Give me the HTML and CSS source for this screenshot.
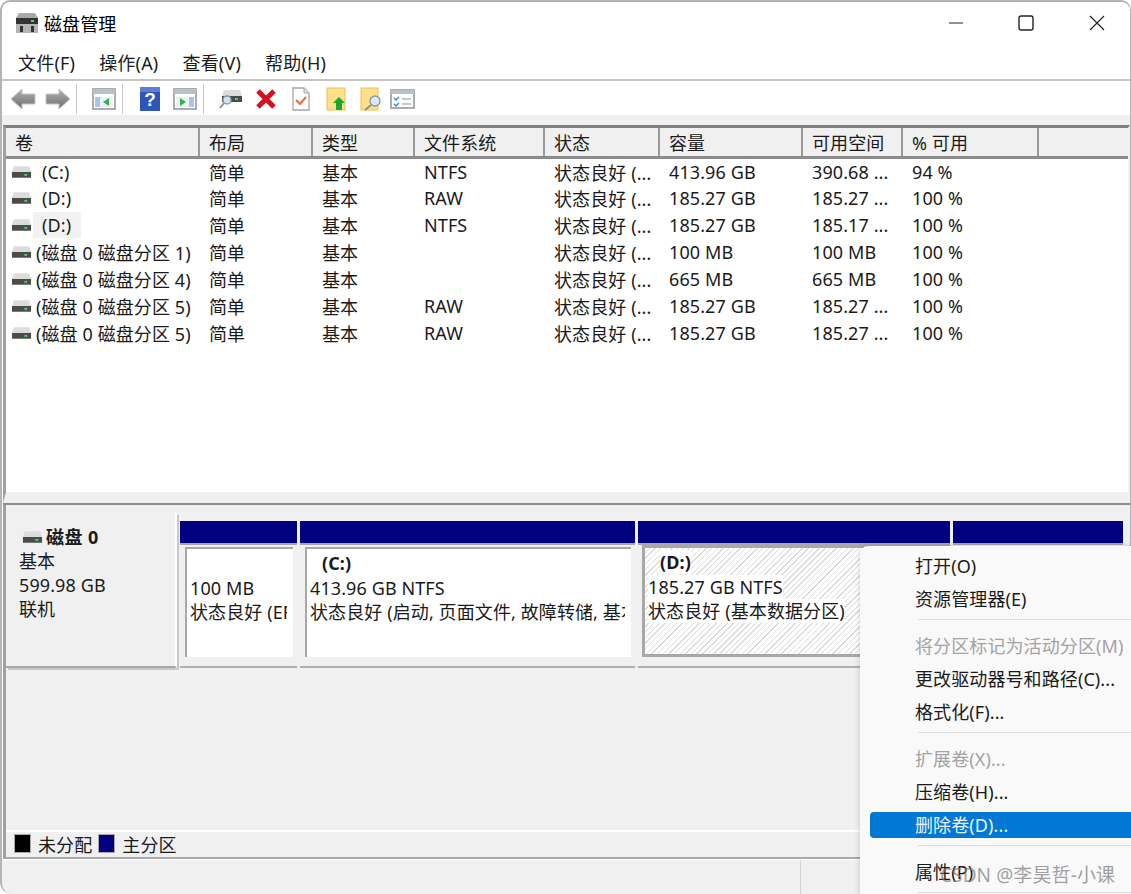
FILE: index.html
```html
<!DOCTYPE html>
<html lang="zh-CN">
<head>
    <meta charset="UTF-8">
    <title>磁盘管理</title>
    <link rel="stylesheet" href="styles.css">
</head>
<body>
    <svg class="defs" width="0" height="0">
        <defs>
            <symbol id="drive" viewBox="0 0 22 14">
                <path d="M3 1h16l2 6H1z" fill="#dcdcdc"/>
                <rect x="1" y="7" width="20" height="6" fill="#4b4b4b"/>
                <rect x="14" y="9" width="3" height="2" fill="#3fdc5a"/>
            </symbol>
            <symbol id="pane" viewBox="0 0 24 22">
                <rect x="1" y="1" width="22" height="20" fill="#fff" stroke="#8b9298" stroke-width="1.5"/>
                <rect x="1" y="1" width="22" height="5" fill="#b9c1c8"/>
                <rect x="3" y="9" width="18" height="10" fill="#eef1f3"/>
            </symbol>
            <linearGradient id="arrow" x1="0" y1="0" x2="0" y2="1">
                <stop offset="0" stop-color="#b0b0b0"/>
                <stop offset="1" stop-color="#6e6e6e"/>
            </linearGradient>
        </defs>
    </svg>

    <div class="window">
        <div class="titlebar">
            <svg class="app-icon" width="24" height="22" viewBox="0 0 24 22">
                <path d="M4 1h16l3 5H1z" fill="#a8a8a8"/>
                <rect x="1" y="6" width="22" height="6" fill="#333"/>
                <rect x="16" y="8" width="3" height="2" fill="#3fdc5a"/>
                <rect x="1" y="12" width="22" height="9" fill="#b4b4b4"/>
                <rect x="5" y="14" width="3" height="6" fill="#333"/>
                <rect x="16" y="14" width="3" height="6" fill="#333"/>
            </svg>
            <span class="title">磁盘管理</span>
            <div class="win-controls">
                <svg width="14" height="14" viewBox="0 0 14 14"><path d="M0 7h14" stroke="#222" fill="none"/></svg>
                <svg width="16" height="16" viewBox="0 0 16 16"><rect x="1" y="1" width="14" height="14" rx="2" fill="none" stroke="#222" stroke-width="1.4"/></svg>
                <svg width="16" height="16" viewBox="0 0 16 16"><path d="M1 1l14 14M15 1L1 15" stroke="#222" stroke-width="1.2" fill="none"/></svg>
            </div>
        </div>

        <div class="menubar">
            <span>文件(F)</span>
            <span>操作(A)</span>
            <span>查看(V)</span>
            <span>帮助(H)</span>
        </div>

        <div class="toolbar">
            <span class="tool"><svg width="26" height="22" viewBox="0 0 26 22"><path d="M1 11L12 1v5h13v10H12v5z" fill="url(#arrow)" stroke="#c4c4c4"/></svg></span>
            <span class="tool"><svg width="26" height="22" viewBox="0 0 26 22"><path d="M25 11L14 1v5H1v10h13v5z" fill="url(#arrow)" stroke="#c4c4c4"/></svg></span>
            <span class="tool-sep"></span>
            <span class="tool"><svg width="24" height="22" viewBox="0 0 24 22"><use href="#pane"/><path d="M3 9h5v10H3z" fill="#a9c6e6"/><path d="M17 10v8l-6-4z" fill="#2fb34a"/></svg></span>
            <span class="tool-sep"></span>
            <span class="tool"><svg width="20" height="24" viewBox="0 0 20 24"><rect width="20" height="24" fill="#2f55b8"/><rect width="20" height="5" fill="#5b7fd6"/><text x="10" y="19" text-anchor="middle" class="help-mark">?</text></svg></span>
            <span class="tool"><svg width="24" height="22" viewBox="0 0 24 22"><use href="#pane"/><path d="M16 9h5v10h-5z" fill="#a9c6e6"/><path d="M7 10v8l6-4z" fill="#2fb34a"/></svg></span>
            <span class="tool-sep"></span>
            <span class="tool"><svg width="24" height="24" viewBox="0 0 24 24"><use href="#drive" x="2" y="2" width="22" height="14"/><circle cx="8" cy="13" r="4" fill="#cfe3f2" stroke="#8a97a3" stroke-width="1.4"/><path d="M5 16l-4 5" stroke="#8a8f94" stroke-width="2"/></svg></span>
            <span class="tool"><svg width="22" height="22" viewBox="0 0 22 22"><path d="M3 3l16 16M19 3L3 19" stroke="#d4111e" stroke-width="5" fill="none"/></svg></span>
            <span class="tool"><svg width="18" height="24" viewBox="0 0 18 24"><path d="M1 1h11l5 5v17H1z" fill="#fff" stroke="#a5a5a5" stroke-width="1.3"/><path d="M12 1v5h5" fill="#e4e4e4" stroke="#a5a5a5"/><path d="M4 13l4 4 6-7" stroke="#ea6a36" stroke-width="2" fill="none"/></svg></span>
            <span class="tool"><svg width="20" height="24" viewBox="0 0 20 24"><rect x="1" y="1" width="18" height="22" fill="#fde08a" stroke="#eec24f"/><path d="M13 10l6 6h-3v7h-6v-7H7z" fill="#19a82f"/></svg></span>
            <span class="tool"><svg width="22" height="24" viewBox="0 0 22 24"><rect x="1" y="1" width="17" height="22" fill="#fde08a" stroke="#eec24f"/><circle cx="15" cy="14" r="5" fill="#d8eaf5" stroke="#8a97a3" stroke-width="1.4"/><path d="M11 18l-6 5" stroke="#8a8f94" stroke-width="2"/></svg></span>
            <span class="tool tool-last"><svg width="25" height="20" viewBox="0 0 25 20"><rect x="1" y="1" width="23" height="18" fill="#fff" stroke="#8b9298" stroke-width="1.5"/><rect x="1" y="1" width="23" height="4" fill="#b9c1c8"/><path d="M4 9l2 2 3-3M4 15l2 2 3-3" stroke="#2f8ae0" stroke-width="1.5" fill="none"/><path d="M12 10h9M12 15h9" stroke="#b5b5b5" stroke-width="1.5"/></svg></span>
        </div>
        <div class="toolbar-gap"></div>

        <div class="list-pane">
            <table class="volumes">
                <colgroup>
                    <col class="c-vol"><col class="c-layout"><col class="c-type"><col class="c-fs"><col class="c-status"><col class="c-cap"><col class="c-free"><col class="c-pct"><col>
                </colgroup>
                <thead>
                    <tr>
                        <th>卷</th><th>布局</th><th>类型</th><th>文件系统</th><th>状态</th><th>容量</th><th>可用空间</th><th>% 可用</th><th></th>
                    </tr>
                </thead>
                <tbody>
                    <tr><td><div class="vol"><svg class="drive-icon"><use href="#drive"/></svg><span class="vol-name">(C:)</span></div></td><td>简单</td><td>基本</td><td>NTFS</td><td>状态良好 (...</td><td>413.96 GB</td><td>390.68 ...</td><td>94 %</td><td></td></tr>
                    <tr><td><div class="vol"><svg class="drive-icon"><use href="#drive"/></svg><span class="vol-name">(D:)</span></div></td><td>简单</td><td>基本</td><td>RAW</td><td>状态良好 (...</td><td>185.27 GB</td><td>185.27 ...</td><td>100 %</td><td></td></tr>
                    <tr><td><div class="vol"><svg class="drive-icon"><use href="#drive"/></svg><span class="vol-name focused">(D:)</span></div></td><td>简单</td><td>基本</td><td>NTFS</td><td>状态良好 (...</td><td>185.27 GB</td><td>185.17 ...</td><td>100 %</td><td></td></tr>
                    <tr><td><div class="vol"><svg class="drive-icon"><use href="#drive"/></svg><span>(磁盘 0 磁盘分区 1)</span></div></td><td>简单</td><td>基本</td><td></td><td>状态良好 (...</td><td>100 MB</td><td>100 MB</td><td>100 %</td><td></td></tr>
                    <tr><td><div class="vol"><svg class="drive-icon"><use href="#drive"/></svg><span>(磁盘 0 磁盘分区 4)</span></div></td><td>简单</td><td>基本</td><td></td><td>状态良好 (...</td><td>665 MB</td><td>665 MB</td><td>100 %</td><td></td></tr>
                    <tr><td><div class="vol"><svg class="drive-icon"><use href="#drive"/></svg><span>(磁盘 0 磁盘分区 5)</span></div></td><td>简单</td><td>基本</td><td>RAW</td><td>状态良好 (...</td><td>185.27 GB</td><td>185.27 ...</td><td>100 %</td><td></td></tr>
                    <tr><td><div class="vol"><svg class="drive-icon"><use href="#drive"/></svg><span>(磁盘 0 磁盘分区 5)</span></div></td><td>简单</td><td>基本</td><td>RAW</td><td>状态良好 (...</td><td>185.27 GB</td><td>185.27 ...</td><td>100 %</td><td></td></tr>
                </tbody>
            </table>
        </div>
        <div class="split-rule"></div>

        <div class="disk-pane">
            <div class="disk-row">
                <div class="disk-label">
                    <div class="disk-name"><svg class="drive-icon"><use href="#drive"/></svg><b>磁盘 0</b></div>
                    <div>基本</div>
                    <div>599.98 GB</div>
                    <div>联机</div>
                </div>
                <div class="partition">
                    <div class="part-bar"></div>
                    <div class="part-body">
                        <p>&nbsp;</p>
                        <p>100 MB</p>
                        <p>状态良好 (EFI 系统分区)</p>
                    </div>
                </div>
                <div class="partition">
                    <div class="part-bar"></div>
                    <div class="part-body">
                        <p class="part-name">(C:)</p>
                        <p>413.96 GB NTFS</p>
                        <p>状态良好 (启动, 页面文件, 故障转储, 基本数据分区)</p>
                    </div>
                </div>
                <div class="partition">
                    <div class="part-bar"></div>
                    <div class="part-body hatched">
                        <p class="part-name"><span>(D:)</span></p>
                        <p><span>185.27 GB NTFS</span></p>
                        <p><span>状态良好 (基本数据分区)</span></p>
                    </div>
                </div>
                <div class="partition">
                    <div class="part-bar"></div>
                    <div class="part-body"></div>
                </div>
            </div>
            <div class="disk-rule"></div>
            <div class="legend">
                <span class="swatch swatch-free"></span><span>未分配</span>
                <span class="swatch swatch-primary"></span><span>主分区</span>
            </div>
        </div>

        <div class="statusbar"><span class="status-cell"></span></div>
    </div>

    <div class="context-menu">
        <div class="item">打开(O)</div>
        <div class="item">资源管理器(E)</div>
        <div class="menu-sep"></div>
        <div class="item disabled">将分区标记为活动分区(M)</div>
        <div class="item">更改驱动器号和路径(C)...</div>
        <div class="item">格式化(F)...</div>
        <div class="menu-sep"></div>
        <div class="item disabled">扩展卷(X)...</div>
        <div class="item">压缩卷(H)...</div>
        <div class="item active">删除卷(D)...</div>
        <div class="menu-sep"></div>
        <div class="item">属性(P)</div>
        <div class="menu-sep"></div>
    </div>

    <div class="watermark">CSDN @李昊哲-小课</div>
</body>
</html>
```

FILE: styles.css
```css
* {
    box-sizing: border-box;
}

html, body {
    margin: 0;
    height: 894px;
    overflow: hidden;
    background: #fff;
}

body {
    position: relative;
    font-family: "Noto Sans", "Noto Sans CJK SC", sans-serif;
    font-size: 18px;
    letter-spacing: 0.1px;
    color: #1a1a1a;
}

.defs {
    position: absolute;
}

.window {
    height: 894px;
    display: flex;
    flex-direction: column;
    background: #fff;
    border: 2px solid #b4b4b4;
    border-bottom: 0;
    border-right-width: 1px;
    border-radius: 10px 10px 0 12px;
    overflow: hidden;
}

.titlebar {
    height: 48px;
    flex: none;
    display: flex;
    align-items: center;
    padding: 0 0 6px 13px;
}

.app-icon {
    margin-right: 5px;
}

.title {
    color: #000;
}

.win-controls {
    margin-left: auto;
    display: flex;
    align-items: center;
    gap: 55px;
    padding-right: 25px;
}

.menubar {
    height: 31px;
    flex: none;
    display: flex;
    gap: 24px;
    padding: 0 0 5px 16px;
    align-items: center;
    letter-spacing: 0.2px;
    border-bottom: 2px solid #c4c4c4;
}

.toolbar {
    height: 34px;
    flex: none;
    display: flex;
    align-items: center;
    padding: 2px 0 0 3px;
}

.tool {
    width: 35px;
    display: flex;
    justify-content: center;
}

.tool-last {
    margin-left: -3px;
}

.tool-sep {
    width: 1px;
    height: 30px;
    margin: 0 9px 0 1px;
    background: #c8c8c8;
}

.help-mark {
    font-family: "Liberation Sans", sans-serif;
    font-size: 19px;
    font-weight: bold;
    fill: #fff;
}

.toolbar-gap {
    height: 10px;
    flex: none;
    background: #f0f0f0;
}

.list-pane {
    height: 378px;
    flex: none;
    background: #fff;
    border-top: 3px solid #808080;
    border-left: 3px solid #a0a0a0;
    border-right: 2px solid #f0f0f0;
    border-bottom: 11px solid #f0f0f0;
    margin-left: 1px;
}

.split-rule {
    height: 2px;
    flex: none;
    margin-left: 1px;
    background: #8c8c8c;
}

.volumes {
    width: 1122px;
    table-layout: fixed;
    border-collapse: collapse;
}

.c-vol { width: 193px; }
.c-layout { width: 113px; }
.c-type { width: 102px; }
.c-fs { width: 130px; }
.c-status { width: 115px; }
.c-cap { width: 143px; }
.c-free { width: 100px; }
.c-pct { width: 136px; }

th {
    height: 29px;
    padding: 0 0 0 9px;
    font-weight: normal;
    text-align: left;
    background: #f0f0f0;
    border-right: 2px solid #9a9a9a;
    border-bottom: 3px solid #8c8c8c;
}

th:last-child {
    border-right: 0;
}

td {
    height: 27px;
    padding: 0 0 0 10px;
    white-space: nowrap;
    overflow: hidden;
}

td:first-child {
    padding-left: 5px;
}

.vol {
    display: flex;
    align-items: center;
}

.drive-icon {
    width: 21px;
    height: 14px;
    flex: none;
    margin-right: 4px;
}

.vol-name {
    margin-left: 6px;
}

.focused {
    margin-left: -3px;
    padding: 0 10px 0 9px;
    line-height: 26px;
    background: #f2f2f2;
}

.disk-pane {
    flex: 1;
    display: flex;
    flex-direction: column;
    background: #f0f0f0;
    padding-top: 8px;
    margin-left: 1px;
    border-left: 3px solid #a0a0a0;
}

.disk-row {
    display: grid;
    grid-template-columns: 171px 117px 335px 312px 170px;
    gap: 3px;
    height: 155px;
}

.disk-label {
    padding: 12px 0 0 13px;
    line-height: 24px;
    border-right: 2px solid #fff;
    border-bottom: 2px solid #a8a8a8;
    box-shadow: 2px 2px 0 #c8c8c8;
}

.disk-name {
    display: flex;
    align-items: center;
    padding-left: 3px;
    letter-spacing: 0.4px;
}

.disk-name .drive-icon {
    margin-right: 3px;
}

.partition {
    padding-top: 8px;
    min-width: 0;
    border-bottom: 2px solid #b0b0b0;
}

.part-bar {
    height: 22px;
    background: #000080;
    box-shadow: 0 2px 0 #a8a8a8;
}

.part-body {
    height: 110px;
    margin: 4px 4px 0 5px;
    padding: 2px 6px 0 3px;
    background: #fff;
    border-top: 2px solid #a8a8a8;
    border-left: 2px solid #a8a8a8;
    line-height: 24.5px;
    white-space: nowrap;
}

.part-body p {
    margin: 0;
    overflow: hidden;
}

.part-name {
    font-weight: bold;
    padding-left: 12px;
}

.hatched {
    margin: 2px 0 0 4px;
    height: 112px;
    padding-left: 3px;
    border: 3px solid #a8a8a8;
    background: repeating-linear-gradient(135deg, #fff, #fff 3px, #dadada 3px, #dadada 4px);
}

.hatched span {
    background: #fff;
}

.disk-rule {
    flex: 1;
}

.legend {
    height: 29px;
    flex: none;
    display: flex;
    align-items: center;
    padding: 0 0 2px 8px;
    border-top: 2px solid #fff;
    border-bottom: 2px solid #a8a8a8;
}

.swatch {
    width: 17px;
    height: 19px;
    margin-right: 7px;
    border: 1px solid #a8a8a8;
}

.swatch-free {
    background: #000;
}

.swatch-primary {
    margin-left: 6px;
    background: #000080;
}

.statusbar {
    height: 35px;
    flex: none;
    margin-left: -3px;
    display: flex;
    justify-content: flex-end;
    background: #f0f0f0;
    border-top: 1px solid #fff;
}

.status-cell {
    width: 330px;
    border-left: 1px solid #d4d4d4;
}

.context-menu {
    position: absolute;
    left: 860px;
    top: 546px;
    width: 280px;
    height: 360px;
    display: flex;
    flex-direction: column;
    gap: 7px;
    padding: 7px 0 0 10px;
    background: #f9f9f9;
    border-radius: 8px 0 0 0;
    box-shadow: 0 0 6px rgba(0, 0, 0, 0.18);
}

.item {
    height: 26px;
    flex: none;
    padding-left: 45px;
    line-height: 26px;
    white-space: nowrap;
    border-radius: 4px 0 0 4px;
}

.disabled {
    color: #a3a3a3;
}

.active {
    background: #0078d4;
    color: #e8f3fc;
}

.menu-sep {
    height: 1px;
    flex: none;
    margin: 0 0 6px 48px;
    background: #dcdcdc;
}

.watermark {
    position: absolute;
    left: 940px;
    top: 860px;
    font-size: 19px;
    color: rgba(120, 120, 120, 0.7);
}
```
